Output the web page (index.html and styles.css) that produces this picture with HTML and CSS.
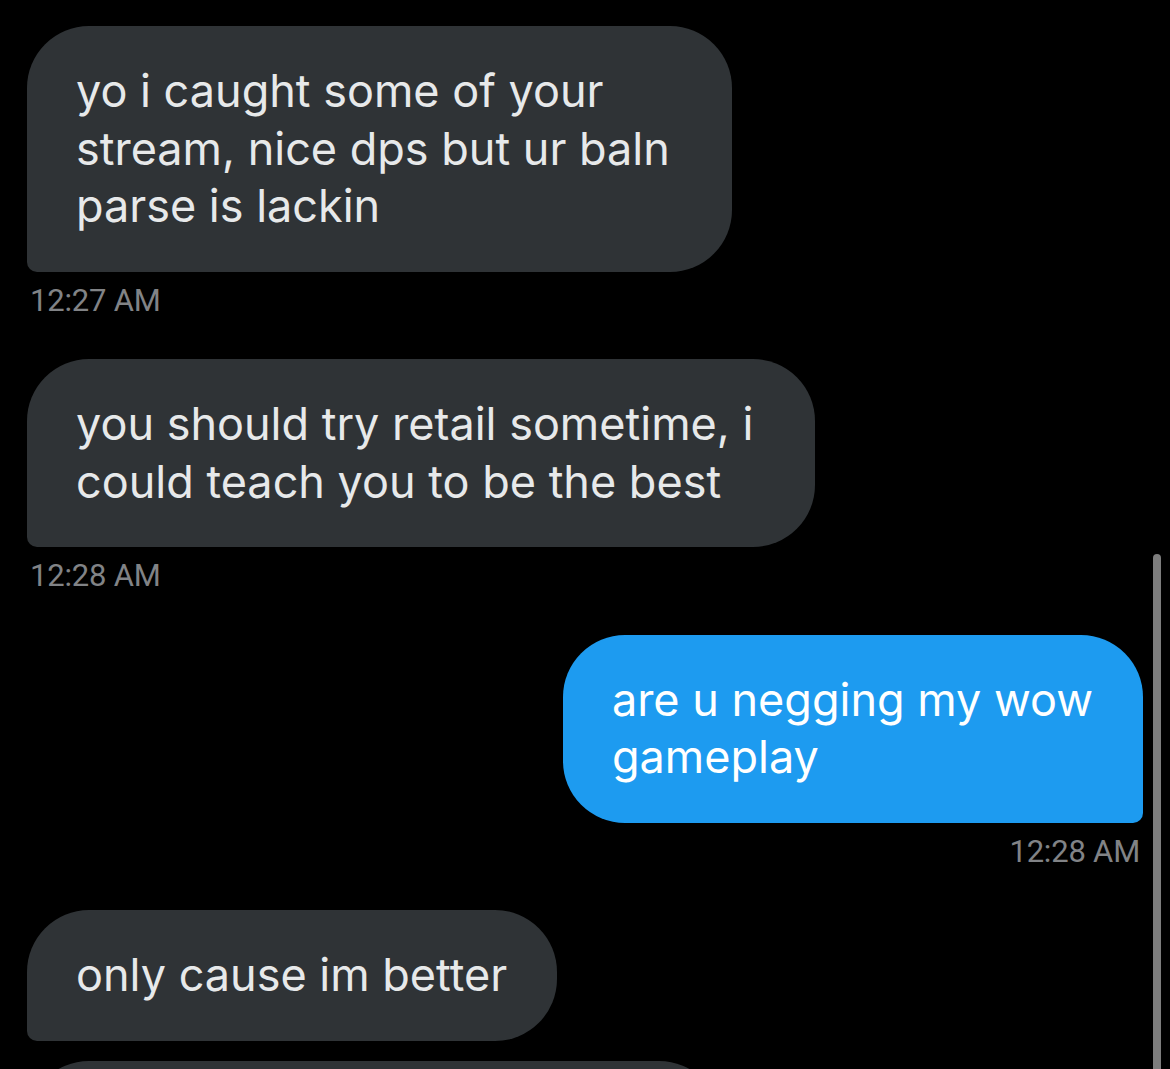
FILE: index.html
```html
<!DOCTYPE html>
<html lang="en">
<head>
    <meta charset="UTF-8">
    <title>Messages</title>
    <link rel="stylesheet" href="styles.css">
</head>
<body>
    <div class="thread">
        <div class="msg msg-in">
            <div class="bubble bubble-wrapped">yo i caught some of your<br>stream, nice dps but ur baln<br>parse is lackin</div>
            <div class="time">12:27 AM</div>
        </div>
        <div class="msg msg-in">
            <div class="bubble bubble-wrapped">you should try retail sometime, i<br>could teach you to be the best</div>
            <div class="time">12:28 AM</div>
        </div>
        <div class="msg msg-out">
            <div class="bubble">are u negging my wow<br>gameplay</div>
            <div class="time">12:28 AM</div>
        </div>
        <div class="msg msg-in msg-group">
            <div class="bubble">only cause im better</div>
        </div>
        <div class="msg msg-in">
            <div class="bubble bubble-cut">&nbsp;</div>
        </div>
    </div>
    <div class="scrollbar"></div>
</body>
</html>
```
FILE: styles.css
```css
/* Dark DM thread */
html,
body {
    overflow: hidden;
}

body {
    margin: 0;
    background-color: #000;
    font-family: Inter, "Noto Sans", sans-serif;
    height: 1069px;
}

.thread {
    display: flex;
    flex-direction: column;
    padding: 26px 27px 0 27px;
}

.msg {
    display: flex;
    flex-direction: column;
    margin-bottom: 40.5px;
}

.msg-in {
    align-items: flex-start;
}

.msg-out {
    align-items: flex-end;
}

.msg-group {
    margin-bottom: 20px;
}

.bubble {
    font-size: 45px;
    line-height: 57.5px;
    padding: 36px 50px 37px 49px;
    border-radius: 62px;
    box-sizing: border-box;
}

.bubble-wrapped {
    padding-right: 62px;
}

.msg-in .bubble {
    background-color: #2f3336;
    color: #e7e9ea;
    border-bottom-left-radius: 10px;
}

.msg-out .bubble {
    background-color: #1d9bf0;
    color: #fff;
    border-bottom-right-radius: 10px;
}

.bubble-cut {
    width: 694px;
}

.time {
    font-family: Roboto, Inter, sans-serif;
    font-size: 31px;
    line-height: 36px;
    color: #818386;
    margin-top: 11px;
    padding: 0 3px;
    letter-spacing: -0.2px;
}

.scrollbar {
    position: absolute;
    top: 554px;
    right: 9px;
    width: 8px;
    height: 530px;
    border-radius: 4px;
    background-color: #7d7d7d;
}
```
